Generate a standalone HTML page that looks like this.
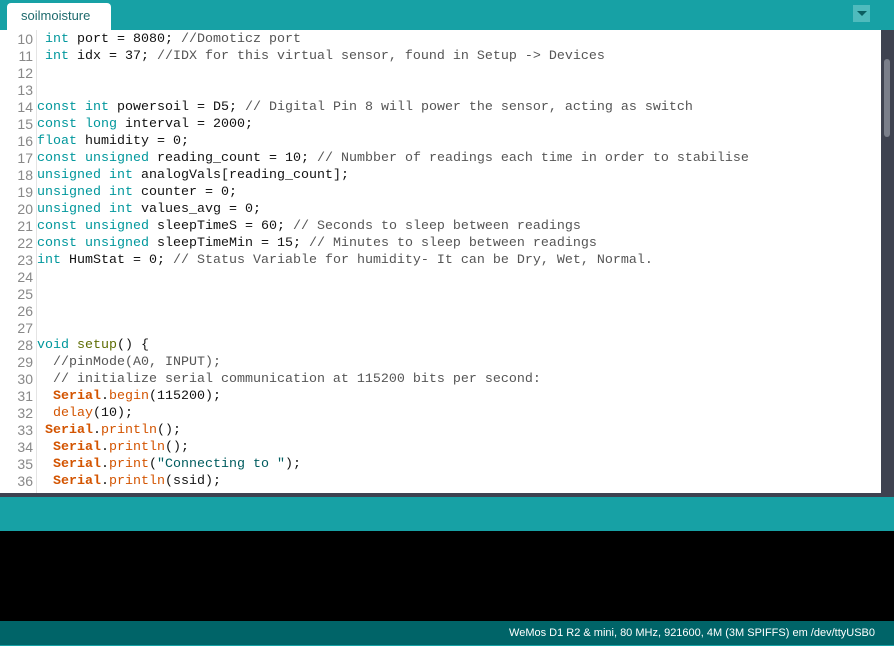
<!DOCTYPE html>
<html><head><style>
body{margin:0;width:894px;height:645px;overflow:hidden;background:#17a1a5;position:relative;font-family:"Liberation Sans",sans-serif}
#tab{position:absolute;left:7px;top:3px;width:104px;height:27px;background:#fff;border-radius:4px 4px 0 0;font-size:13px;color:#1e6a6d;line-height:26px;text-indent:14px}
#dd{position:absolute;left:853px;top:5px;width:17px;height:17px;background:#4fbbbd}
#dd:after{content:"";position:absolute;left:4px;top:6px;border:5px solid transparent;border-top:5px solid #0b5e61;border-bottom:0}
#ed{position:absolute;left:0;top:30px;width:881px;height:463px;background:#fff;overflow:hidden}
#gl{position:absolute;left:36px;top:0;width:1px;height:463px;background:#e4e4e4}
#sb{position:absolute;left:881px;top:30px;width:13px;height:467px;background:#3e4250}
#th{position:absolute;left:884px;top:59px;width:6px;height:78px;border-radius:3px;background:#7a7e8a}
#sep{position:absolute;left:0;top:493px;width:881px;height:4px;background:#3e4250}
#con{position:absolute;left:0;top:531px;width:894px;height:90px;background:#000}
#st{position:absolute;left:0;top:621px;width:894px;height:24px;background:#006468;color:#fff;font-size:11px;line-height:25px;text-align:right;padding-right:19px;box-sizing:border-box}
pre{margin:0;position:absolute;top:1px;font-family:"Liberation Mono",monospace;font-size:13.33px;line-height:17px}
#nums{left:0;width:33px;text-align:right;color:#888;font-family:"Liberation Sans",sans-serif;font-size:14px}
#code{left:37px;color:#111}
.k{color:#00979c}.c{color:#555}.o{color:#d35400}.b{color:#d35400;font-weight:bold}.f{color:#5e6d03}.s{color:#005c5f}
</style></head><body>
<div id="tab">soilmoisture</div><div id="dd"></div>
<div id="ed"><div id="gl"></div>
<pre id="nums">10
11
12
13
14
15
16
17
18
19
20
21
22
23
24
25
26
27
28
29
30
31
32
33
34
35
36
37</pre>
<pre id="code"> <span class="k">int</span> port = 8080; <span class="c">//Domoticz port</span>
 <span class="k">int</span> idx = 37; <span class="c">//IDX for this virtual sensor, found in Setup -&gt; Devices</span>


<span class="k">const</span> <span class="k">int</span> powersoil = D5; <span class="c">// Digital Pin 8 will power the sensor, acting as switch</span>
<span class="k">const</span> <span class="k">long</span> interval = 2000;
<span class="k">float</span> humidity = 0;
<span class="k">const</span> <span class="k">unsigned</span> reading_count = 10; <span class="c">// Numbber of readings each time in order to stabilise</span>
<span class="k">unsigned</span> <span class="k">int</span> analogVals[reading_count];
<span class="k">unsigned</span> <span class="k">int</span> counter = 0;
<span class="k">unsigned</span> <span class="k">int</span> values_avg = 0;
<span class="k">const</span> <span class="k">unsigned</span> sleepTimeS = 60; <span class="c">// Seconds to sleep between readings</span>
<span class="k">const</span> <span class="k">unsigned</span> sleepTimeMin = 15; <span class="c">// Minutes to sleep between readings</span>
<span class="k">int</span> HumStat = 0; <span class="c">// Status Variable for humidity- It can be Dry, Wet, Normal.</span>




<span class="k">void</span> <span class="f">setup</span>() {
  <span class="c">//pinMode(A0, INPUT);</span>
  <span class="c">// initialize serial communication at 115200 bits per second:</span>
  <span class="b">Serial</span>.<span class="o">begin</span>(115200);
  <span class="o">delay</span>(10);
 <span class="b">Serial</span>.<span class="o">println</span>();
  <span class="b">Serial</span>.<span class="o">println</span>();
  <span class="b">Serial</span>.<span class="o">print</span>(<span class="s">"Connecting to "</span>);
  <span class="b">Serial</span>.<span class="o">println</span>(ssid);
</pre></div>
<div id="sb"></div><div id="th"></div>
<div id="sep"></div>
<div id="con"></div>
<div id="st">WeMos D1 R2 &amp; mini, 80 MHz, 921600, 4M (3M SPIFFS) em /dev/ttyUSB0</div>
</body></html>
